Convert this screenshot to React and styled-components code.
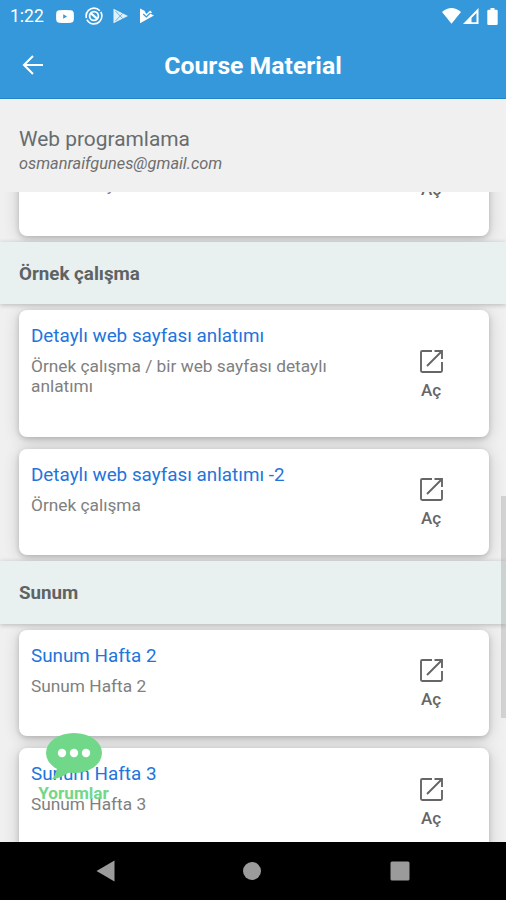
import React from 'react';
import styled, { createGlobalStyle } from 'styled-components';

const GlobalStyle = createGlobalStyle`
  * {
    box-sizing: border-box;
  }

  body {
    margin: 0;
    font-family: Roboto, 'Noto Sans', sans-serif;
    background-color: #f0f0f0;
  }
`;

const Screen = styled.div`
  display: flex;
  flex-direction: column;
  width: 506px;
  height: 900px;
  overflow: hidden;
  background-color: #f0f0f0;
`;

const StatusBar = styled.div`
  display: flex;
  align-items: center;
  justify-content: space-between;
  height: 32px;
  padding: 0 8px 0 10px;
  background-color: #3498db;
  color: #fff;
`;

const StatusGroup = styled.div`
  display: flex;
  align-items: center;
  gap: ${({ $gap }) => $gap}px;

  svg {
    display: block;
  }
`;

const Clock = styled.span`
  width: 36px;
  font-size: 17.5px;
  line-height: 32px;
`;

const Header = styled.header`
  display: grid;
  grid-template-columns: 66px 1fr 66px;
  align-items: center;
  height: 67px;
  border-bottom: 1px solid #2583c8;
  background-color: #3498db;
  color: #fff;
`;

const BackButton = styled.button`
  display: flex;
  justify-content: center;
  padding: 0 0 1px;
  border: none;
  background: transparent;
  color: inherit;
`;

const HeaderTitle = styled.h1`
  margin: 0;
  padding-top: 1px;
  text-align: center;
  font-size: 24.75px;
  font-weight: 700;
  line-height: 30px;
`;

const CourseInfo = styled.div`
  height: 93px;
  padding: 27px 19px 0;
  background-color: #f0f0f0;
`;

const CourseName = styled.div`
  font-size: 20.9px;
  line-height: 27px;
  color: #666c6e;
`;

const CourseEmail = styled.div`
  font-size: 16.35px;
  font-style: italic;
  line-height: 22px;
  color: #6e6e6e;
`;

const ListViewport = styled.main`
  position: relative;
  flex: 1;
  overflow: hidden;
`;

const List = styled.div`
  display: flex;
  flex-direction: column;
  gap: 6px;
  margin-top: -83px;
`;

const SectionHeader = styled.h2`
  position: relative;
  margin: 0;
  height: 62.5px;
  padding-left: 19px;
  background-color: #e8f0f0;
  box-shadow: 0 1px 5px rgba(0, 0, 0, 0.24);
  font-size: 18.75px;
  font-weight: 700;
  line-height: 65px;
  color: #5e6364;
`;

const CardGroup = styled.div`
  display: flex;
  flex-direction: column;
  gap: 12px;
  padding: 0 17.5px 0 18.5px;
`;

const Card = styled.article`
  display: flex;
  justify-content: space-between;
  min-height: 106.5px;
  padding: 15px 13px 20.5px 12.5px;
  border-radius: 8px;
  background-color: #fff;
  box-shadow:
    0 2px 5px rgba(0, 0, 0, 0.16),
    0 2px 16px rgba(0, 0, 0, 0.18);
`;

const CardBody = styled.div`
  width: 330px;
`;

const CardTitle = styled.div`
  font-size: 18.85px;
  line-height: 22px;
  color: #2274dc;
`;

const CardText = styled.p`
  margin: 9px 0 20px;
  font-size: 17.3px;
  line-height: 20px;
  color: #808080;
`;

const OpenButton = styled.button`
  display: flex;
  flex-direction: column;
  align-items: center;
  align-self: center;
  gap: 6px;
  width: 89px;
  margin-top: 7.5px;
  padding: 0;
  border: none;
  background: transparent;
  font-family: inherit;
  font-size: 17px;
  font-weight: 500;
  line-height: 20px;
  color: #666;
`;

const ScrollThumb = styled.div`
  position: absolute;
  top: 304px;
  right: 0;
  width: 5px;
  height: 222px;
  background-color: rgba(120, 120, 120, 0.25);
`;

const CommentsButton = styled.button`
  position: absolute;
  left: 37px;
  bottom: 39px;
  display: flex;
  flex-direction: column;
  align-items: center;
  width: 73px;
  padding: 0;
  border: none;
  background: transparent;
  font-family: inherit;
  font-size: 17.2px;
  font-weight: 700;
  line-height: 20px;
  color: #71d88a;
`;

const NavBar = styled.nav`
  display: flex;
  align-items: center;
  justify-content: space-between;
  height: 58px;
  padding: 0 96.5px 0 96px;
  background-color: #000;
`;

const sections = [
  {
    items: [{ title: 'Ders notları', text: 'Ders notları / web sayfası hazırlamak için anlatımın yazılımı' }],
  },
  {
    name: 'Örnek çalışma',
    items: [
      {
        title: 'Detaylı web sayfası anlatımı',
        text: 'Örnek çalışma / bir web sayfası detaylı anlatımı',
      },
      { title: 'Detaylı web sayfası anlatımı -2', text: 'Örnek çalışma' },
    ],
  },
  {
    name: 'Sunum',
    items: [
      { title: 'Sunum Hafta 2', text: 'Sunum Hafta 2' },
      { title: 'Sunum Hafta 3', text: 'Sunum Hafta 3' },
    ],
  },
];

const YoutubeIcon = () => (
  <svg width="18" height="13" viewBox="0 0 18 13">
    <path
      fillRule="evenodd"
      fill="#fff"
      d="M3 0.3Q9-.2 15 .3Q17.6.5 17.8 3Q18 6.5 17.8 10Q17.6 12.5 15 12.7Q9 13.2 3 12.7Q.4 12.5.2 10Q0 6.5.2 3Q.4.5 3 .3ZM7.2 4.2V8.8L11 6.5Z"
    />
  </svg>
);

const BlockedIcon = () => (
  <svg width="18" height="18" viewBox="0 0 18 18" fill="none" stroke="#fff">
    <circle cx="9" cy="9" r="7.9" strokeWidth="1.6" strokeDasharray="21 1.5" />
    <circle cx="9" cy="9" r="4.4" strokeWidth="1.8" />
    <path d="M5.7 6.2L12.3 11.8" strokeWidth="2.2" />
  </svg>
);

const PlayStoreIcon = () => (
  <svg width="16" height="16" viewBox="0 0 16 16">
    <path d="M0.5 0.8L15 8L0.5 15.2Z" fill="#fff" fillOpacity="0.85" />
    <path d="M2.5 3L9.5 10.5M2.5 13L9.5 5.5" stroke="#3498db" strokeWidth="0.7" />
  </svg>
);

const PlayCheckIcon = () => (
  <svg width="16" height="16" viewBox="0 0 16 16">
    <path d="M1 0.5L5.5 2.7L7.3 6L11.2 2.5L13 4.2L11.5 5.800L15 7.6L1 15.3Z" fill="#fff" />
    <path d="M4.2 6L7.3 9L11.5 4.8" fill="none" stroke="#3498db" strokeWidth="1.2" />
  </svg>
);

const WifiIcon = () => (
  <svg width="19" height="16" viewBox="0 0 19 16">
    <path d="M0 4Q9.5-3.8 19 4L9.5 15.8Z" fill="#fff" />
  </svg>
);

const SignalIcon = () => (
  <svg width="16" height="16" viewBox="0 0 16 16">
    <path fillRule="evenodd" d="M0 16L15.5 0V16ZM8.5 10V14.3H13.5V5Z" fill="#fff" />
  </svg>
);

const BatteryIcon = styled(({ className }) => (
  <svg className={className} width="11" height="17" viewBox="0 0 11 17">
    <path d="M3.5 0H7.5V1.8H9.5Q10.7 1.8 10.7 3V15.7Q10.7 17 9.5 17H1.5Q.3 17 .3 15.7V3Q.3 1.8 1.5 1.8H3.5Z" fill="#fff" />
  </svg>
))`
  margin-left: 6px;
`;

const BackIcon = () => (
  <svg width="22" height="20" viewBox="0 0 22 20" fill="none" stroke="#fff" strokeWidth="2.1">
    <path d="M21 10H2.5M11 1L2 10L11 19" />
  </svg>
);

const OpenIcon = () => (
  <svg width="25" height="25" viewBox="0 0 25 25" fill="none" stroke="#666" strokeWidth="1.9">
    <path d="M13 2H3.2Q2 2 2 3.2V21.8Q2 23 3.2 23H21.8Q23 23 23 21.8V13" />
    <path d="M15.5 2H23V10M8 17L22.5 2.5" />
  </svg>
);

const BubbleIcon = () => (
  <svg width="58" height="50" viewBox="0 0 58 50">
    <ellipse cx="29" cy="20" rx="28" ry="20" fill="#71d88a" />
    <path d="M12 34Q12 41 6.5 46.5Q17 45 26 38Z" fill="#71d88a" />
    <circle cx="17" cy="20" r="4.2" fill="#fff" />
    <circle cx="29" cy="20" r="4.2" fill="#fff" />
    <circle cx="41" cy="20" r="4.2" fill="#fff" />
  </svg>
);

const App = () => (
  <>
    <GlobalStyle />
    <Screen>
      <StatusBar>
        <StatusGroup $gap={10.3}>
          <Clock>1:22</Clock>
          <YoutubeIcon />
          <BlockedIcon />
          <PlayStoreIcon />
          <PlayCheckIcon />
        </StatusGroup>
        <StatusGroup $gap={2}>
          <WifiIcon />
          <SignalIcon />
          <BatteryIcon />
        </StatusGroup>
      </StatusBar>
      <Header>
        <BackButton aria-label="Geri">
          <BackIcon />
        </BackButton>
        <HeaderTitle>Course Material</HeaderTitle>
      </Header>
      <CourseInfo>
        <CourseName>Web programlama</CourseName>
        <CourseEmail>osmanraifgunes@gmail.com</CourseEmail>
      </CourseInfo>
      <ListViewport>
        <List>
          {sections.map(({ name, items }) => (
            <React.Fragment key={name || 'first'}>
              {name && <SectionHeader>{name}</SectionHeader>}
              <CardGroup>
                {items.map(({ title, text }) => (
                  <Card key={title}>
                    <CardBody>
                      <CardTitle>{title}</CardTitle>
                      <CardText>{text}</CardText>
                    </CardBody>
                    <OpenButton>
                      <OpenIcon />
                      Aç
                    </OpenButton>
                  </Card>
                ))}
              </CardGroup>
            </React.Fragment>
          ))}
        </List>
        <ScrollThumb />
        <CommentsButton>
          <BubbleIcon />
          Yorumlar
        </CommentsButton>
      </ListViewport>
      <NavBar>
        <svg width="19" height="22" viewBox="0 0 19 22">
          <path d="M18.5 0.5V21.5L0.5 11Z" fill="#9b9b9b" />
        </svg>
        <svg width="18" height="18" viewBox="0 0 18 18">
          <circle cx="9" cy="9" r="9" fill="#9b9b9b" />
        </svg>
        <svg width="20" height="20" viewBox="0 0 20 20">
          <rect x="0.5" y="0.5" width="19" height="19" rx="1.5" fill="#9b9b9b" />
        </svg>
      </NavBar>
    </Screen>
  </>
);

export default App;
